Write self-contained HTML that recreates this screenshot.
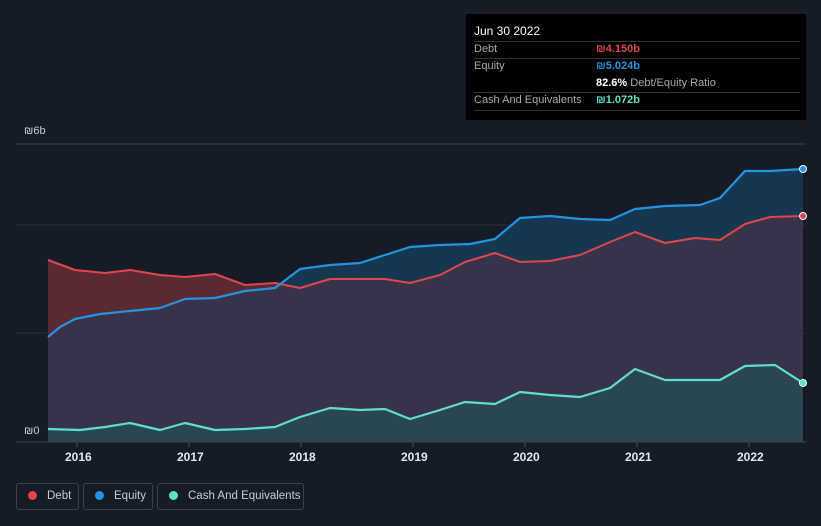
<!DOCTYPE html><html><head><style>
body{margin:0;background:#161c27;width:821px;height:526px;overflow:hidden;font-family:"Liberation Sans",sans-serif;position:relative}
.tt{position:absolute;left:466px;top:14px;width:340px;height:106px;background:#000;color:#fff;font-size:11px}
.tt .r{position:absolute;left:8px;right:6px;border-top:1px solid #333}
.lg{position:absolute;top:483px;height:27px;border:1px solid #3a404c;border-radius:3px;color:#c9cdd4;font-size:11.5px;line-height:25px;box-sizing:border-box;white-space:nowrap}
.lg i{display:inline-block;width:9px;height:9px;border-radius:50%;margin:0 10px 0 11px;vertical-align:-1px}
.ax{position:absolute;top:450px;color:#e6e8eb;font-size:12px;font-weight:bold}
</style></head><body>
<svg width="821" height="526" style="position:absolute;left:0;top:0">
<line x1="16" y1="144" x2="806" y2="144" stroke="#3a404c"/>
<line x1="16" y1="225" x2="806" y2="225" stroke="#2a303b"/>
<line x1="16" y1="333" x2="806" y2="333" stroke="#2a303b"/>
<path d="M48,337 L60,327 75,319 100,314 130,311 160,308 185,299 215,298 245,291 275,288 300,269 330,265 360,263 385,255 410,247 440,245 470,244 495,239 520,218 550,216 580,219 610,220 635,209 665,206 700,205 720,198 745,171 770,171 803,169 L803,442 48,442Z" fill="#173650"/>
<path d="M48,260 L75,270 105,273 130,270 160,275 185,277 215,274 245,285 275,283 300,288 330,279 360,279 385,279 410,283 440,275 465,262 495,253 520,262 550,261 580,255 610,242 635,232 665,243 695,238 720,240 745,224 770,217 803,216 L803,442 48,442Z" fill="#5a2a33"/>
<path d="M48,337 L60,327 75,319 100,314 130,311 160,308 185,299 215,298 245,291 275,288 292,286 300,288 330,279 360,279 385,279 410,283 440,275 465,262 495,253 520,262 550,261 580,255 610,242 635,232 665,243 695,238 720,240 745,224 770,217 803,216 L803,442 48,442Z" fill="#39334a"/>
<path d="M48,429 L80,430 105,427 130,423 160,430 185,423 215,430 245,429 275,427 300,417 330,408 360,410 385,409 410,419 440,410 465,402 495,404 520,392 550,395 580,397 610,388 635,369 665,380 695,380 720,380 745,366 775,365 803,383 L803,442 48,442Z" fill="#2c4650"/>
<path d="M48,260 L75,270 105,273 130,270 160,275 185,277 215,274 245,285 275,283 300,288 330,279 360,279 385,279 410,283 440,275 465,262 495,253 520,262 550,261 580,255 610,242 635,232 665,243 695,238 720,240 745,224 770,217 803,216" fill="none" stroke="#e0464e" stroke-width="2" stroke-linejoin="round"/>
<path d="M48,337 L60,327 75,319 100,314 130,311 160,308 185,299 215,298 245,291 275,288 300,269 330,265 360,263 385,255 410,247 440,245 470,244 495,239 520,218 550,216 580,219 610,220 635,209 665,206 700,205 720,198 745,171 770,171 803,169" fill="none" stroke="#2394e0" stroke-width="2.2" stroke-linejoin="round"/>
<path d="M48,429 L80,430 105,427 130,423 160,430 185,423 215,430 245,429 275,427 300,417 330,408 360,410 385,409 410,419 440,410 465,402 495,404 520,392 550,395 580,397 610,388 635,369 665,380 695,380 720,380 745,366 775,365 803,383" fill="none" stroke="#5ee0c8" stroke-width="2.2" stroke-linejoin="round"/>
<line x1="16" y1="442" x2="806" y2="442" stroke="#3a404c"/>
<g stroke="#4a505c"><line x1="77" y1="443" x2="77" y2="447"/><line x1="189" y1="443" x2="189" y2="447"/><line x1="301" y1="443" x2="301" y2="447"/><line x1="413" y1="443" x2="413" y2="447"/><line x1="525" y1="443" x2="525" y2="447"/><line x1="637" y1="443" x2="637" y2="447"/><line x1="749" y1="443" x2="749" y2="447"/></g>
<circle cx="803" cy="169" r="3.5" fill="#2394e0" stroke="#fff"/>
<circle cx="803" cy="216" r="3.5" fill="#e0464e" stroke="#fff"/>
<circle cx="803" cy="383" r="3.5" fill="#5ee0c8" stroke="#fff"/>
</svg>
<div style="position:absolute;left:24px;top:125px;color:#c9cdd4;font-size:11px">₪6b</div>
<div style="position:absolute;left:24px;top:425px;color:#c9cdd4;font-size:11px">₪0</div>
<div class="ax" style="left:65px">2016</div><div class="ax" style="left:177px">2017</div><div class="ax" style="left:289px">2018</div><div class="ax" style="left:401px">2019</div><div class="ax" style="left:513px">2020</div><div class="ax" style="left:625px">2021</div><div class="ax" style="left:737px">2022</div>
<div class="tt">
<div style="position:absolute;left:8px;top:10px;font-size:12px">Jun 30 2022</div>
<div class="r" style="top:27px"></div><div style="position:absolute;left:8px;top:29px;color:#aaa">Debt</div><div style="position:absolute;left:130px;top:29px;color:#e0464e;font-weight:bold">₪4.150b</div>
<div class="r" style="top:44px"></div><div style="position:absolute;left:8px;top:46px;color:#aaa">Equity</div><div style="position:absolute;left:130px;top:46px;color:#2394e0;font-weight:bold">₪5.024b</div>
<div style="position:absolute;left:130px;top:63px;color:#aaa"><b style="color:#fff">82.6%</b> Debt/Equity Ratio</div>
<div class="r" style="top:78px"></div><div style="position:absolute;left:8px;top:80px;color:#aaa">Cash And Equivalents</div><div style="position:absolute;left:130px;top:80px;color:#5ee0c8;font-weight:bold">₪1.072b</div>
<div class="r" style="top:96px"></div>
</div>
<div class="lg" style="left:16px;width:63px"><i style="background:#e0464e"></i>Debt</div>
<div class="lg" style="left:83px;width:70px"><i style="background:#2394e0"></i>Equity</div>
<div class="lg" style="left:157px;width:147px"><i style="background:#5ee0c8"></i>Cash And Equivalents</div>
</body></html>
